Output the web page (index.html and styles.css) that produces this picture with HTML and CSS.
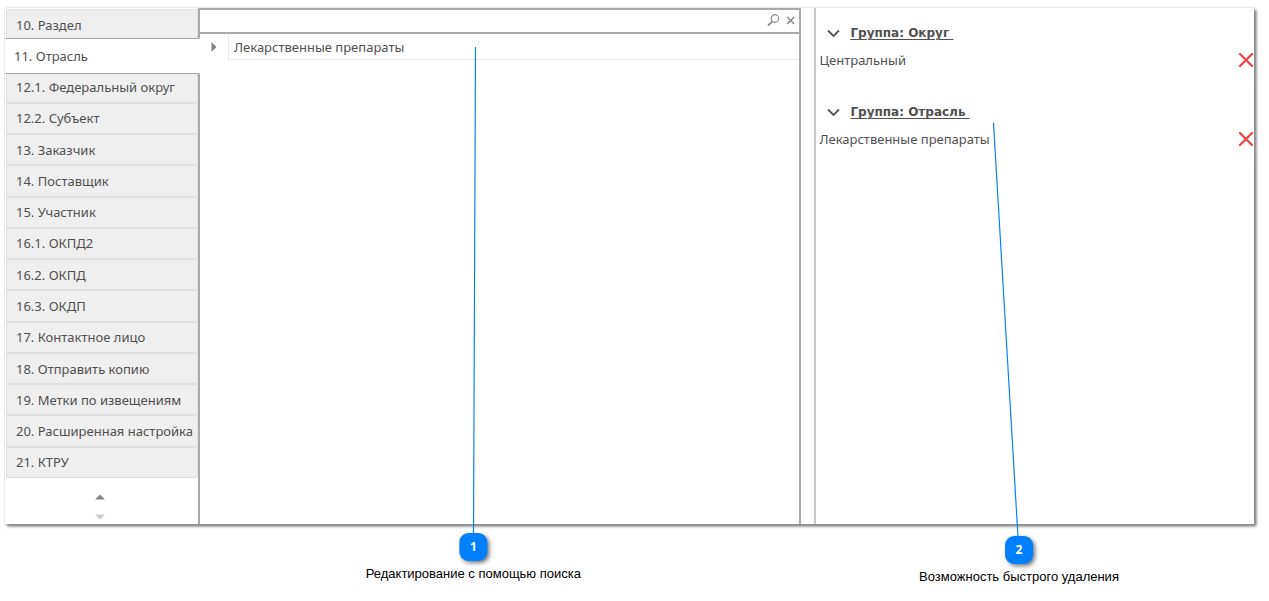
FILE: index.html
```html
<!DOCTYPE html>
<html lang="ru">
<head>
<meta charset="utf-8">
<title>Настройка: Отрасль</title>
<link rel="stylesheet" href="styles.css">
</head>
<body>
<div class="page">
  <main class="panel">
    <nav class="sidebar" aria-label="Разделы">
      <div class="tabs">
        <button class="tab">10. Раздел</button>
        <button class="tab tab-active" aria-current="page">11. Отрасль</button>
        <button class="tab">12.1. Федеральный округ</button>
        <button class="tab">12.2. Субъект</button>
        <button class="tab">13. Заказчик</button>
        <button class="tab">14. Поставщик</button>
        <button class="tab">15. Участник</button>
        <button class="tab">16.1. ОКПД2</button>
        <button class="tab">16.2. ОКПД</button>
        <button class="tab">16.3. ОКДП</button>
        <button class="tab">17. Контактное лицо</button>
        <button class="tab">18. Отправить копию</button>
        <button class="tab">19. Метки по извещениям</button>
        <button class="tab">20. Расширенная настройка</button>
        <button class="tab">21. КТРУ</button>
      </div>
      <div class="scroller">
        <button class="arrow" aria-label="Вверх"><svg width="10" height="6" viewBox="0 0 10 6"><path d="M0 5.5 5 .5l5 5z" fill="#858585"/></svg></button>
        <button class="arrow" aria-label="Вниз" disabled><svg width="10" height="6" viewBox="0 0 10 6"><path d="M0 .5h10l-5 5z" fill="#cdcdcd"/></svg></button>
      </div>
    </nav>
    <section class="tree">
      <div class="search">
        <input class="search-input" type="text" aria-label="Поиск">
        <button class="icon-button" aria-label="Найти"><svg width="14" height="14" viewBox="0 0 14 14" fill="none" stroke="#8a8a8a"><circle cx="8" cy="4.500" r="3.800" stroke-width="1.200"/><path d="M5.300 7.300 1 11.500" stroke-width="1.800"/></svg></button>
        <button class="icon-button" aria-label="Очистить"><svg width="10" height="10" viewBox="0 0 10 10" fill="none" stroke="#8a8a8a" stroke-width="1.600"><path d="m1.200 1 7 7M8.200 1l-7 7"/></svg></button>
      </div>
      <div class="tree-row">
        <button class="expander" aria-label="Развернуть"><svg width="6" height="10" viewBox="0 0 6 10"><path d="M.5 0 5.500 5l-5 5z" fill="#858585"/></svg></button>
        <span class="tree-label">Лекарственные препараты</span>
      </div>
    </section>
    <aside class="selection">
      <section class="group">
        <h2 class="group-head"><button class="toggle"><svg width="13" height="9" viewBox="0 0 13 9" fill="none" stroke="#555" stroke-width="1.900"><path d="m1 1.500 5.500 5.500L12 1.500"/></svg><span class="group-name">Группа: Округ </span></button></h2>
        <div class="item"><span>Центральный</span><button class="remove" aria-label="Удалить Центральный"><svg width="16" height="16" viewBox="0 0 16 16" fill="none" stroke="#f04848" stroke-width="2.400" stroke-linecap="round"><path d="m2 2 12 12M14 2 2 14"/></svg></button></div>
      </section>
      <section class="group">
        <h2 class="group-head"><button class="toggle"><svg width="13" height="9" viewBox="0 0 13 9" fill="none" stroke="#555" stroke-width="1.900"><path d="m1 1.500 5.500 5.500L12 1.500"/></svg><span class="group-name">Группа: Отрасль </span></button></h2>
        <div class="item"><span>Лекарственные препараты</span><button class="remove" aria-label="Удалить Лекарственные препараты"><svg width="16" height="16" viewBox="0 0 16 16" fill="none" stroke="#f04848" stroke-width="2.400" stroke-linecap="round"><path d="m2 2 12 12M14 2 2 14"/></svg></button></div>
      </section>
    </aside>
  </main>
  <svg class="leaders" viewBox="0 0 1269 601" preserveAspectRatio="none" aria-hidden="true">
    <path d="M475.500 47 473.500 535M993.500 123l24.500 414"/>
  </svg>
  <div class="callout callout-search"><span class="badge">1</span><span>Редактирование с помощью поиска</span></div>
  <div class="callout callout-remove"><span class="badge">2</span><span>Возможность быстрого удаления</span></div>
</div>
</body>
</html>
```
FILE: styles.css
```css
* { box-sizing: border-box; }
body {
  margin: 0;
  background: #fff;
  color: #505050;
  font: 13px/16px "Noto Sans", "Open Sans", sans-serif;
}
button {
  border: 0;
  padding: 0;
  background: none;
  color: inherit;
  font: inherit;
}
svg { display: block; }
.page {
  position: relative;
  min-height: 100vh;
  padding: 8px 15px 77px 5px;
  display: flex;
}
.panel {
  flex: 1;
  display: grid;
  grid-template-columns: 193px 4fr 3fr;
  background: #fff;
  box-shadow: 0 0 2px #ccc, 2px 2px 3px #555;
}
.sidebar {
  display: flex;
  flex-direction: column;
}
.tabs {
  flex: 1;
  display: flex;
  flex-direction: column;
  padding-top: 1px;
}
.tab {
  flex: 1 1 28px;
  margin-left: 1px;
  padding: 0 9px;
  border: 1px solid #e0e0e0;
  background: #efefef;
  text-align: left;
  white-space: nowrap;
}
.tab-active {
  flex-basis: 32px;
  z-index: 1;
  margin: -2px -2px -2px 0;
  padding: 0 8px;
  border-color: #aaa transparent;
  background: #fff;
}
.scroller {
  height: 46px;
  display: flex;
  flex-direction: column;
  align-items: center;
  justify-content: center;
  gap: 14px;
  padding: 12px 3px 0 0;
}
.tree {
  border: 2px solid #aaa;
  border-bottom: 0;
}
.search {
  display: flex;
  align-items: center;
  gap: 5px;
  height: 24px;
  padding-right: 3px;
  border-bottom: 2px solid #aaa;
}
.search-input {
  flex: 1;
  min-width: 0;
  height: 22px;
  border: 0;
  outline: 0;
  background: none;
  font: inherit;
}
.tree-row {
  display: flex;
  height: 26px;
}
.expander {
  width: 28px;
  display: grid;
  place-items: center;
}
.tree-label {
  flex: 1;
  padding: 5px;
  border: solid #e8e8e8;
  border-width: 0 0 1px 1px;
}
.selection {
  margin-left: 13px;
  padding: 15px 0 0 3px;
  border-left: 2px solid #c8c8c8;
}
.group { margin-bottom: 29px; }
.group-head {
  margin: 0;
  font: bold 12px/20px "DejaVu Sans", sans-serif;
}
.toggle {
  display: flex;
  align-items: center;
  gap: 10px;
  padding-left: 8px;
}
.group-name {
  white-space: pre;
  text-decoration: underline;
  text-decoration-thickness: 1px;
  text-underline-offset: 2px;
}
.item {
  display: flex;
  align-items: center;
  justify-content: space-between;
  height: 26px;
  margin-top: 4px;
}
.leaders {
  position: absolute;
  inset: 0;
  width: 100%;
  height: 100%;
  fill: none;
  stroke: #0a80f5;
  stroke-width: 1.2;
  pointer-events: none;
}
.callout {
  position: absolute;
  display: flex;
  flex-direction: column;
  align-items: center;
  gap: 5px;
  transform: translateX(-50%);
  color: #000;
  font: 13px/16px "Liberation Sans", Arial, sans-serif;
  white-space: nowrap;
}
.callout-search { left: 37.3%; bottom: 19px; }
.callout-remove { left: 80.3%; bottom: 16px; }
.badge {
  width: 28px;
  height: 28px;
  border-radius: 9px;
  background: #0080ff;
  box-shadow: 2px 2px 4px #777;
  color: #fff;
  font: bold 12px/28px "Open Sans", "Noto Sans", sans-serif;
  text-align: center;
}
```
